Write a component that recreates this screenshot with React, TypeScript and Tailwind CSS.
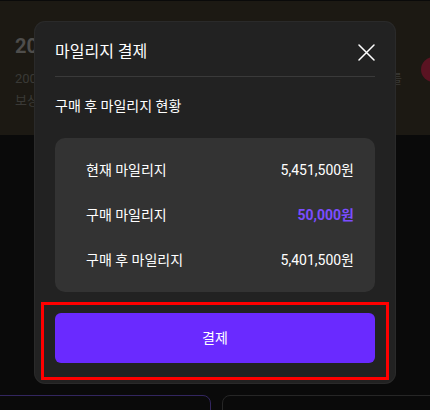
import React from "react";

const rows = [
    { label: "현재 마일리지", value: "5,451,500원", accent: false },
    { label: "구매 마일리지", value: "50,000원", accent: true },
    { label: "구매 후 마일리지", value: "5,401,500원", accent: false },
];

function CloseIcon() {
    return (
        <svg width="17" height="17" viewBox="0 0 17 17" fill="none">
            <path d="M1 1L16 16M16 1L1 16" stroke="#ffffff" strokeWidth="1.5" strokeLinecap="round" />
        </svg>
    );
}

export default function App() {
    return (
        <div
            className="relative h-[410px] w-[430px] overflow-hidden bg-[#0a0a0a]"
            style={{ fontFamily: 'Roboto, "Noto Sans CJK KR", sans-serif' }}
        >
            {/* page behind the modal */}
            <div className="mt-[1px] flex h-[134px] flex-col bg-[#1c1913] pl-[15px] pt-[34px]">
                <div className="text-[20px] font-bold leading-[22px] text-[#4e4d4b]">2024</div>
                <div className="mt-[14px] flex items-center pr-[28px] text-[13px] leading-[16px] text-[#3a3936]">
                    <span>2000마일리지</span>
                    <span className="ml-auto">를</span>
                </div>
                <div className="mt-[6px] text-[13px] leading-[16px] text-[#3a3936]">보상</div>
            </div>
            <div className="absolute left-[421px] top-[57px] h-[25px] w-[30px] rounded-full bg-[#5a1322]" />
            <div className="absolute left-[-10px] top-[395px] h-[40px] w-[221px] rounded-tr-[8px] border border-[#33265f]" />
            <div className="absolute left-[222px] top-[395px] h-[40px] w-[230px] rounded-tl-[8px] border border-[#262626]" />

            {/* modal */}
            <div className="absolute left-[35px] top-[22px] w-[360px] rounded-[10px] bg-[#222222] px-[20px] pb-[20px] pt-[18px] shadow-[0_0_0_1px_#2a2a2a]">
                <div className="flex h-[24px] items-center justify-between">
                    <span className="text-[16px] text-white">마일리지 결제</span>
                    <CloseIcon />
                </div>
                <div className="mt-[12px] h-px bg-[#3a3a3a]" />
                <div className="mt-[19px] h-[20px] text-[14px] leading-[20px] text-white">구매 후 마일리지 현황</div>
                <div className="mt-[22px] flex flex-col gap-[25px] rounded-[10px] bg-[#333333] pb-[22px] pl-[31px] pr-[21px] pt-[22px]">
                    {rows.map((row, index) => (
                        <div key={index} className="flex h-[20px] items-center justify-between text-[14px] leading-[20px]">
                            <span className="text-white">{row.label}</span>
                            <span className={row.accent ? "font-bold text-[#7b4dff]" : "text-white"}>{row.value}</span>
                        </div>
                    ))}
                </div>
                <button className="mt-[21px] flex h-[50px] w-full items-center justify-center rounded-[6px] bg-[#6a2aff] text-[14px] text-white">
                    결제
                </button>
            </div>

            {/* annotation outline */}
            <div className="absolute left-[41px] top-[302px] h-[78px] w-[348px] border-[3px] border-[#ff0000]" />
        </div>
    );
}
